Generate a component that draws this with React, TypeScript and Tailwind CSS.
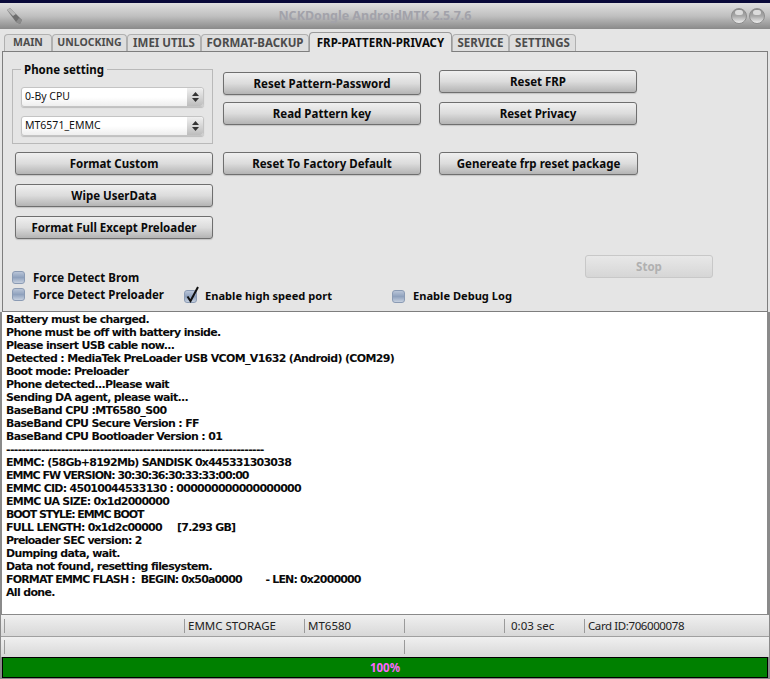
import React from 'react'

const font = "font-['Noto_Sans','Liberation_Sans',sans-serif]"

const tabs = ['MAIN', 'UNLOCKING', 'IMEI UTILS', 'FORMAT-BACKUP', 'FRP-PATTERN-PRIVACY', 'SERVICE', 'SETTINGS']
const tabWidths = [48, 75, 74, 108, 143, 57, 67]

// the caps and digit lines run narrower in the original, so they get tighter tracking
const logLines: [string, string][] = [
  ['Battery must be charged.', ''],
  ['Phone must be off with battery inside.', ''],
  ['Please insert USB cable now...', ''],
  ['Detected : MediaTek PreLoader USB VCOM_V1632 (Android) (COM29)', ''],
  ['Boot mode: Preloader', ''],
  ['Phone detected...Please wait', ''],
  ['Sending DA agent, please wait...', ''],
  ['BaseBand CPU :MT6580_S00', ''],
  ['BaseBand CPU Secure Version : FF', ''],
  ['BaseBand CPU Bootloader Version : 01', ''],
  ['------------------------------------------------------------------', ''],
  ['EMMC: (58Gb+8192Mb) SANDISK 0x445331303038', 'tracking-[-0.74px]'],
  ['EMMC FW VERSION: 30:30:36:30:33:33:00:00', 'tracking-[-0.97px]'],
  ['EMMC CID: 45010044533130 : 000000000000000000', 'tracking-[-0.73px]'],
  ['EMMC UA SIZE: 0x1d2000000', 'tracking-[-0.75px]'],
  ['BOOT STYLE: EMMC BOOT', 'tracking-[-1.1px]'],
  ['FULL LENGTH: 0x1d2c00000     [7.293 GB]', 'tracking-[-0.78px]'],
  ['Preloader SEC version: 2', 'tracking-[-0.73px]'],
  ['Dumping data, wait.', ''],
  ['Data not found, resetting filesystem.', ''],
  ['FORMAT EMMC FLASH :  BEGIN: 0x50a0000        - LEN: 0x2000000', 'tracking-[-0.85px]'],
  ['All done.', ''],
]

function Btn({ label, className = '' }: { label: string; className?: string }) {
  return (
    <button className={`h-[23px] w-[198px] rounded-[3px] border border-[#6f6f6f] bg-gradient-to-b from-[#f0f0f0] via-[#dcdcdc] to-[#b4b4b4] text-[11.5px] font-bold text-[#0a0a0a] shadow-[0_1px_1px_#c4c4c4] ${className}`}>
      {label}
    </button>
  )
}

function Combo({ label }: { label: string }) {
  return (
    <div className="flex h-[20px] w-[183px] items-center rounded-[3px] border border-[#c4c4c4] bg-gradient-to-b from-white via-white to-[#eeeeee] shadow-[0_1px_1px_#bdbdbd]">
      <span className="flex-1 pl-[3px] text-[10.5px] text-[#111]">{label}</span>
      <span className="flex h-full w-[16px] flex-col items-center justify-center gap-[2px] rounded-r-[3px] bg-gradient-to-b from-[#f0f0f0] to-[#bdbdbd]">
        <svg width="7" height="4" viewBox="0 0 7 4"><path d="M3.5 0 7 4H0z" fill="#333" /></svg>
        <svg width="7" height="4" viewBox="0 0 7 4"><path d="M3.5 4 0 0h7z" fill="#333" /></svg>
      </span>
    </div>
  )
}

function Check({ label, checked = false, textClass = 'text-[11.5px]' }: { label: string; checked?: boolean; textClass?: string }) {
  return (
    <div className="flex h-[15px] items-center gap-[8px]">
      <span className="relative h-[13px] w-[13px] rounded-[3px] border border-[#8b9bb4] bg-gradient-to-b from-[#b9c5d8] via-[#8fa1bd] to-[#c6d0df]">
        {checked && (
          <svg className="absolute left-[0px] top-[-5px]" width="16" height="18" viewBox="0 0 16 18">
            <path d="M2.5 10.5 5.5 15 13 1" fill="none" stroke="#111" strokeWidth="2" />
          </svg>
        )}
      </span>
      <span className={`${textClass} font-bold text-[#0a0a0a]`}>{label}</span>
    </div>
  )
}

function StatusCell({ width, label, className = '' }: { width: string; label?: string; className?: string }) {
  return (
    <div className={`flex h-[14px] items-center border-l border-[#9a9a9a] pl-[3px] text-[11.5px] text-[#222] ${width} ${className}`}>
      {label}
    </div>
  )
}

function CircleBtn() {
  return (
    <span className="relative h-[16px] w-[16px] rounded-full border border-[#8e8e8e] bg-gradient-to-b from-[#8c8c8c] via-[#a8a8a8] to-[#f0f0f0]">
      <span className="absolute left-[3px] top-[1px] h-[5px] w-[8px] rounded-full bg-[#dcdcdc]" />
    </span>
  )
}

export default function App() {
  return (
    <div className={`flex h-[679px] w-[770px] flex-col overflow-hidden bg-[#8a8a8a] ${font}`}>
      <div className="h-[3px] shrink-0 bg-[#0a0a3a]" />

      {/* Barra de titulo */}
      <div className="relative flex h-[26px] shrink-0 items-center justify-center bg-gradient-to-b from-[#e0e0e0] via-[#c0c0c0] to-[#8a8a8a] pr-[20px]">
        <svg className="absolute left-[4px] top-[4px]" width="20" height="18" viewBox="0 0 20 18">
          <path d="M3 3 6 1 18 13 16 17 12 15z" fill="#6e6e6e" />
          <path d="M3 3 6 1 12 7 9 9z" fill="#b8b8b8" />
          <path d="M12 15 16 17 18 13 15 11z" fill="#8c8c8c" />
        </svg>
        <span className="text-[12.5px] font-bold text-[#a2a2aa]">NCKDongle AndroidMTK 2.5.7.6</span>
        <div className="absolute right-[5px] top-[5px] flex gap-[2px]">
          <CircleBtn />
          <CircleBtn />
        </div>
      </div>

      {/* Contenido principal */}
      <div className="flex h-[283px] shrink-0 flex-col bg-[#e5e5e5] pl-[2px] pr-[2px]">
        <div className="flex h-[22px] shrink-0 items-end pl-[2px] pt-[3px]">
          {tabs.map((t, i) => {
            const active = t === 'FRP-PATTERN-PRIVACY'
            return (
              <div
                key={t}
                style={{ width: tabWidths[i] }}
                className={
                  active
                    ? 'relative z-10 mb-[-1px] flex h-[20px] items-center justify-center rounded-t-[4px] border border-b-0 border-[#9a9a9a] bg-[#e5e5e5] text-[11.5px] font-bold text-[#0a0a0a]'
                    : t === 'MAIN' || t === 'UNLOCKING'
                      ? 'flex h-[17px] items-center justify-center rounded-t-[4px] border border-b-0 border-[#b0b0b0] bg-[#dedede] text-[10.5px] font-bold text-[#4c4c4c]'
                      : 'flex h-[17px] items-center justify-center rounded-t-[4px] border border-b-0 border-[#b0b0b0] bg-[#dedede] text-[11.5px] font-bold text-[#4c4c4c]'
                }
              >
                {t}
              </div>
            )
          })}
        </div>

        <div className="flex flex-1 flex-col border border-[#7e7e7e] bg-[#e5e5e5] pl-[12px] pr-[12px]">
          <div className="flex gap-[10px] pt-[17px]">
            <div className="relative ml-[-3px] h-[75px] w-[201px] border border-[#b9b9b9] pl-[8px] pt-[17px]">
              <span className="absolute left-[8px] top-[-7px] bg-[#e5e5e5] px-[3px] text-[11.5px] leading-[14px] font-bold text-[#0a0a0a]">Phone setting</span>
              <div className="flex flex-col gap-[9px]">
                <Combo label="0-By CPU" />
                <Combo label="MT6571_EMMC" />
              </div>
            </div>
            <div className="flex flex-col gap-[7px] pt-[3px]">
              <Btn label="Reset Pattern-Password" />
              <Btn label="Read Pattern key" />
            </div>
            <div className="ml-[8px] flex flex-col gap-[9px] pt-[1px]">
              <Btn label="Reset FRP" />
              <Btn label="Reset Privacy" />
            </div>
          </div>

          <div className="mt-[8px] flex gap-[10px]">
            <div className="flex flex-col gap-[9px]">
              <Btn label="Format Custom" />
              <Btn label="Wipe UserData" />
              <Btn label="Format Full Except Preloader" />
            </div>
            <Btn label="Reset To Factory Default" />
            <Btn label="Genereate frp reset package" className="ml-[8px] w-[199px]" />
          </div>

          <div className="relative mt-[31px] flex flex-col">
            <div className="ml-[-3px] flex flex-col gap-[2px]">
              <Check label="Force Detect Brom" />
              <div className="flex">
                <div className="w-[172px]"><Check label="Force Detect Preloader" /></div>
                <div className="mt-[2px] w-[208px]"><Check label="Enable high speed port" textClass="text-[11.1px]" checked /></div>
                <div className="mt-[2px]"><Check label="Enable Debug Log" textClass="text-[11.1px]" /></div>
              </div>
            </div>
            <button className="absolute left-[570px] top-[-15px] h-[23px] w-[128px] rounded-[3px] border border-[#c8c8c8] bg-gradient-to-b from-[#e8e8e8] to-[#d6d6d6] text-[11.5px] font-bold text-[#b0b0b0]">
              Stop
            </button>
          </div>
        </div>
      </div>

      {/* Registro */}
      <pre className="mx-[2px] mr-[3px] h-[302px] shrink-0 bg-white pl-[4px] pt-[1px] font-['DejaVu_Sans',sans-serif] text-[11px] leading-[13px] font-bold tracking-[-0.66px] text-[#0a0a0a]">
        {logLines.map(([text, cls], i) => (
          <React.Fragment key={i}>
            <span className={cls}>{text}</span>
            {'\n'}
          </React.Fragment>
        ))}
      </pre>

      {/* Barras de estado */}
      <div className="mx-[1px] flex h-[22px] shrink-0 items-center border-t border-[#8a8a8a] bg-gradient-to-b from-[#f0f0f0] to-[#d8d8d8] pl-[3px]">
        <StatusCell width="w-[180px]" />
        <StatusCell width="w-[120px]" label="EMMC STORAGE" />
        <StatusCell width="w-[100px]" label="MT6580" />
        <StatusCell width="w-[100px]" />
        <StatusCell width="w-[80px]" label="0:03 sec" className="pl-[6px]" />
        <StatusCell width="w-[160px]" label="Card ID:706000078" className="tracking-[-0.4px]" />
      </div>
      <div className="mx-[1px] flex h-[21px] shrink-0 items-center border-t border-[#a0a0a0] bg-gradient-to-b from-[#f0f0f0] to-[#d8d8d8] pl-[3px]">
        <StatusCell width="w-[400px]" />
        <StatusCell width="w-[300px]" />
      </div>

      {/* Progreso */}
      <div className="mx-[2px] flex h-[21px] shrink-0 items-center justify-center border border-black bg-[#008000] text-[11.5px] font-bold text-[#ff66ff]">
        100%
      </div>
    </div>
  )
}
